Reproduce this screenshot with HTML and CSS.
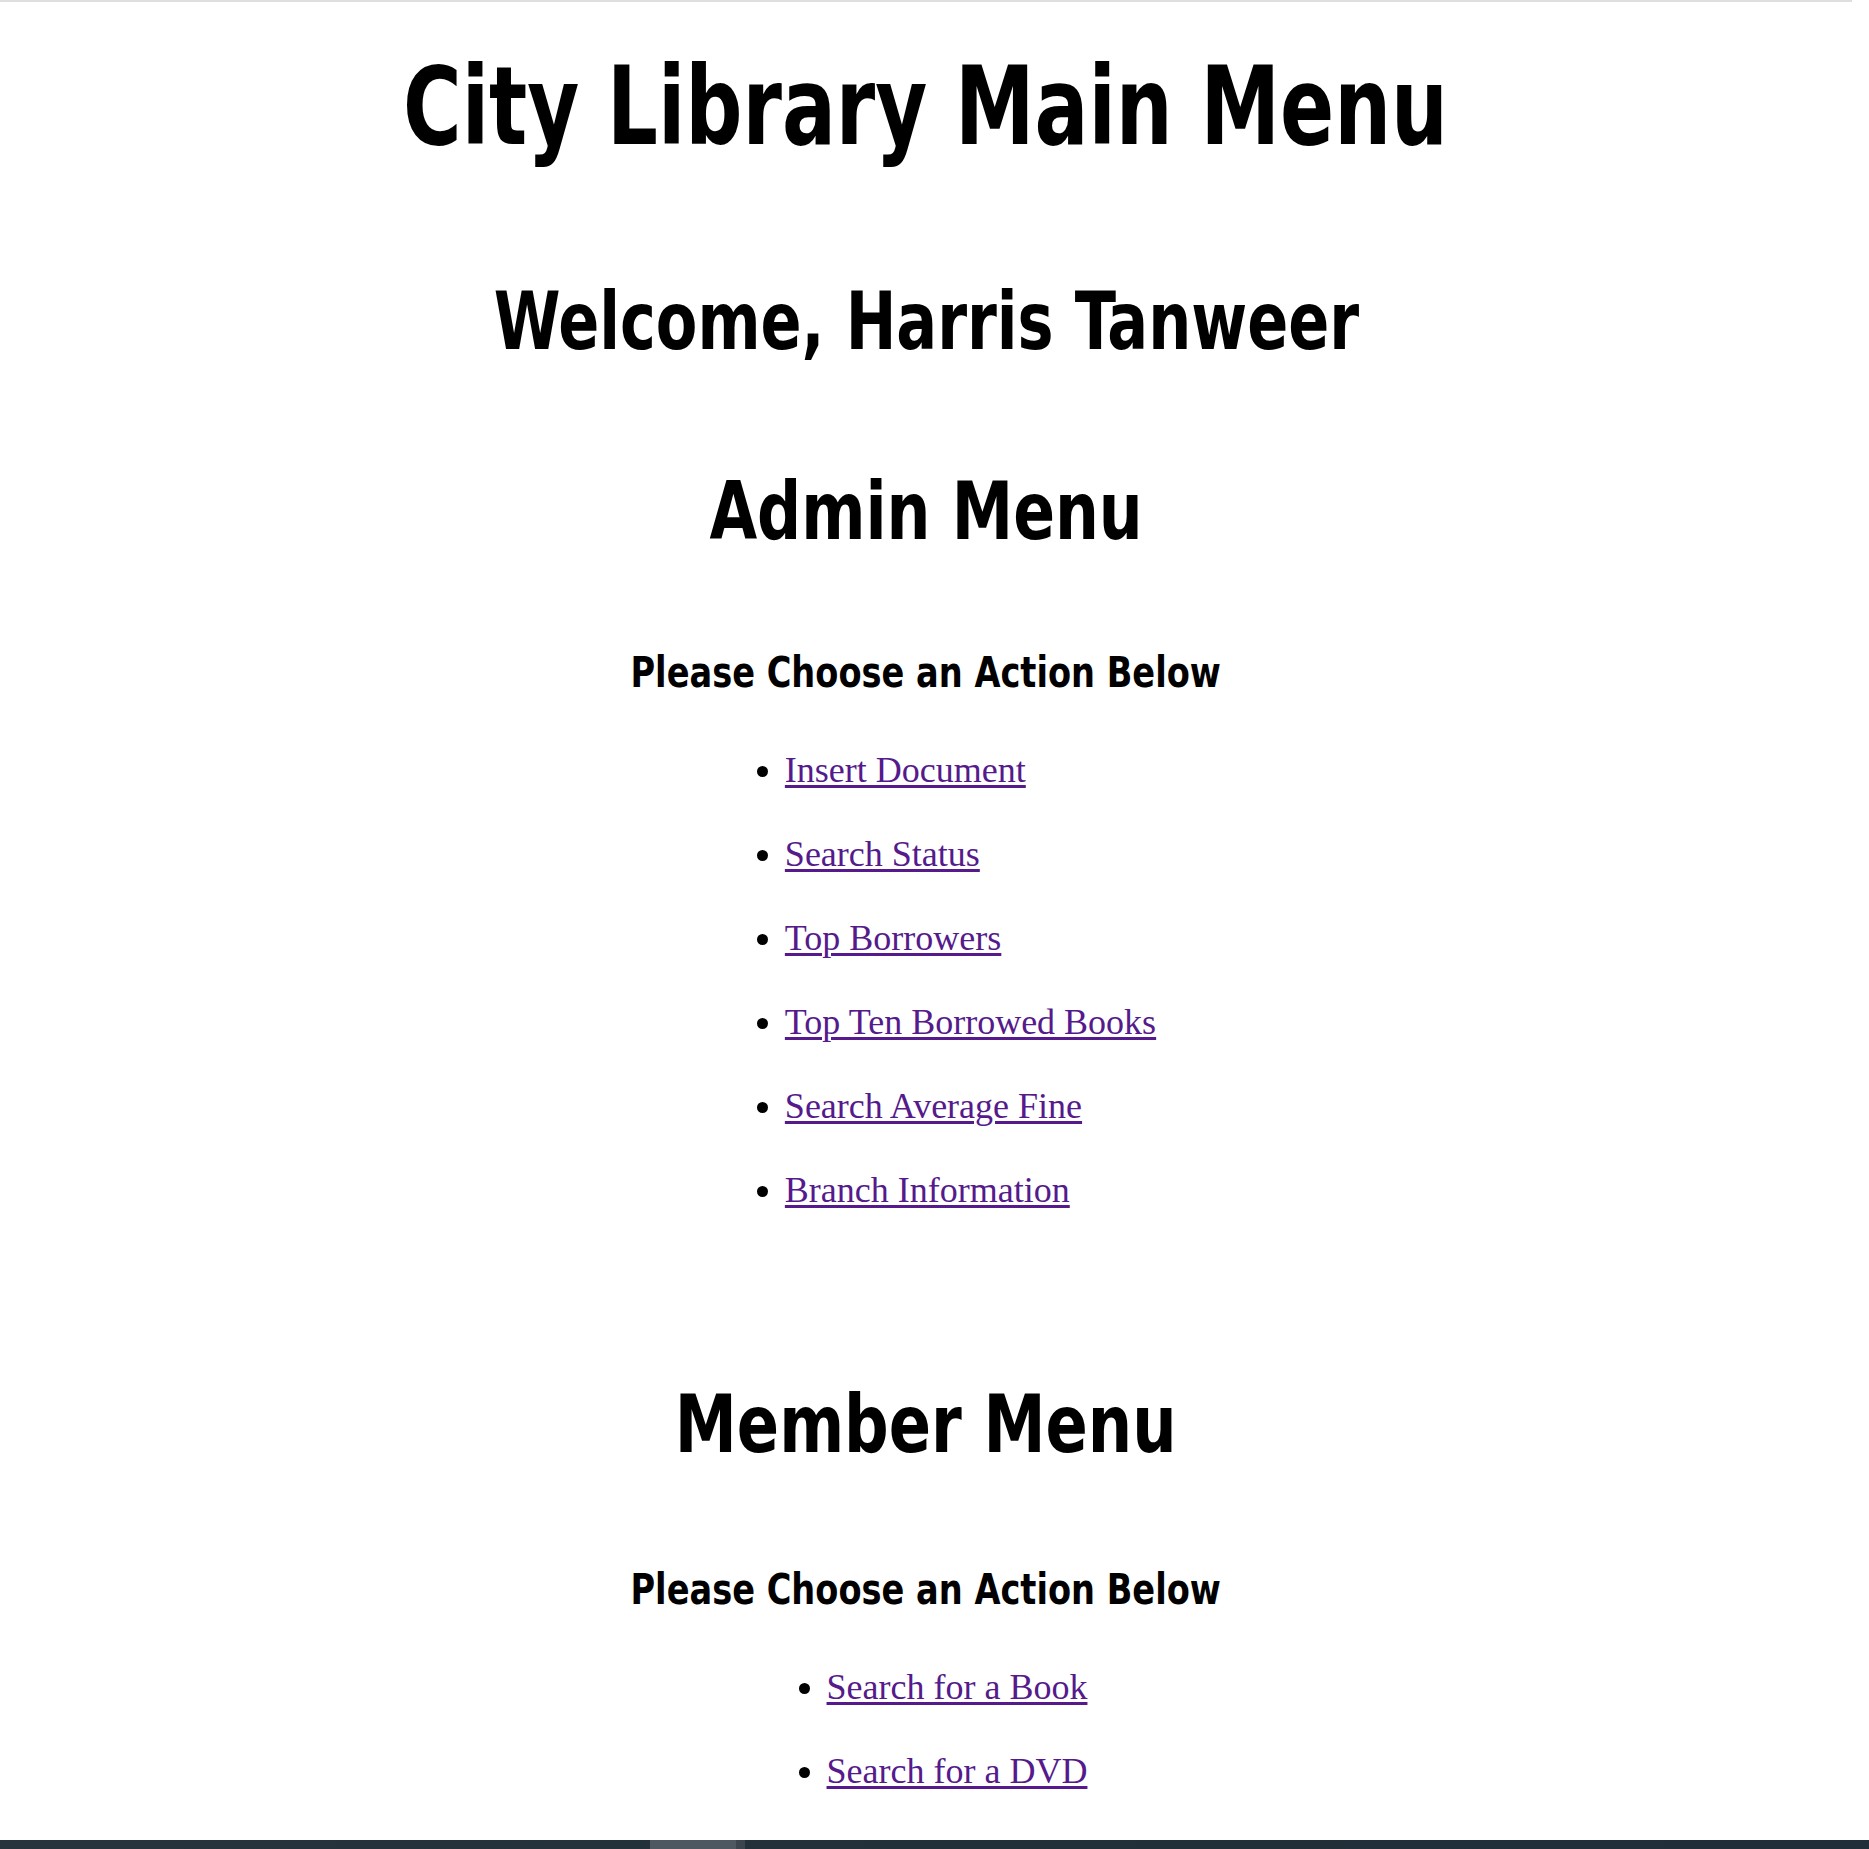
FILE: index.html
```html
<!DOCTYPE html>
<html lang="en">
<head>
<meta charset="utf-8">
<title>City Library Main Menu</title>
<link rel="stylesheet" href="styles.css">
</head>
<body>
<main class="page">
  <h1 class="title">City Library Main Menu</h1>
  <h2 class="welcome">Welcome, Harris Tanweer</h2>

  <section class="menu admin">
    <h2 class="menu-title">Admin Menu</h2>
    <h3 class="prompt">Please Choose an Action Below</h3>
    <ul class="actions">
      <li><a href="#">Insert Document</a></li>
      <li><a href="#">Search Status</a></li>
      <li><a href="#">Top Borrowers</a></li>
      <li><a href="#">Top Ten Borrowed Books</a></li>
      <li><a href="#">Search Average Fine</a></li>
      <li><a href="#">Branch Information</a></li>
    </ul>
  </section>

  <section class="menu member">
    <h2 class="menu-title">Member Menu</h2>
    <h3 class="prompt">Please Choose an Action Below</h3>
    <ul class="actions">
      <li><a href="#">Search for a Book</a></li>
      <li><a href="#">Search for a DVD</a></li>
    </ul>
  </section>
</main>
<div class="taskbar">
  <span class="tb-left"></span>
  <span class="tb-active"></span>
  <span class="tb-divider"></span>
  <span class="tb-right"></span>
</div>
</body>
</html>
```

FILE: styles.css
```css
html, body {
  margin: 0;
  padding: 0;
  background: #ffffff;
}

body {
  border-top: 2px solid #dedede;
  width: 1852px;
  overflow: hidden;
}

.page {
  display: flex;
  flex-direction: column;
  align-items: center;
  font-family: "DejaVu Sans Condensed", "DejaVu Sans", sans-serif;
  font-stretch: condensed;
  color: #000;
}

.title,
.welcome,
.menu-title,
.prompt {
  margin: 0;
  font-weight: bold;
  line-height: 1;
  text-align: center;
  white-space: nowrap;
  transform-origin: 50% 50%;
}

.title {
  font-size: 108px;
  margin-top: 51px;
  transform: scaleX(0.822);
}

.welcome {
  font-size: 80px;
  margin-top: 121px;
  transform: scaleX(0.841);
}

.menu {
  display: flex;
  flex-direction: column;
  align-items: center;
}

.menu-title {
  font-size: 80px;
}

.admin .menu-title {
  margin-top: 110px;
  transform: scaleX(0.856);
}

.member .menu-title {
  margin-top: 153px;
  transform: scaleX(0.866);
}

.prompt {
  font-size: 42px;
  margin-top: 100px;
  transform: scaleX(0.89);
}

.member .prompt {
  margin-top: 104px;
}

.actions {
  margin: 34px 0 0 0;
  padding: 0;
  list-style: disc;
  font-family: "Liberation Serif", "Times New Roman", serif;
  font-size: 36px;
  line-height: 84px;
}

.admin .actions {
  padding-left: 99px;
  padding-right: 10px;
}

.member .actions {
  padding-left: 62px;
}

.actions li {
  margin: 0;
}

.actions a {
  color: #551a8b;
  text-decoration: underline;
  text-decoration-thickness: 2.5px;
  text-underline-offset: 3px;
}

.taskbar {
  position: fixed;
  left: 0;
  right: 0;
  bottom: 0;
  height: 9px;
  display: flex;
  background: linear-gradient(90deg, #27343e 0%, #223039 50%, #1f2e39 100%);
}

.tb-left {
  width: 650px;
}

.tb-active {
  width: 86px;
  background: #4d5861;
}

.tb-divider {
  width: 9px;
  background: #3a454d;
}

.tb-right {
  flex: 1;
}
```
